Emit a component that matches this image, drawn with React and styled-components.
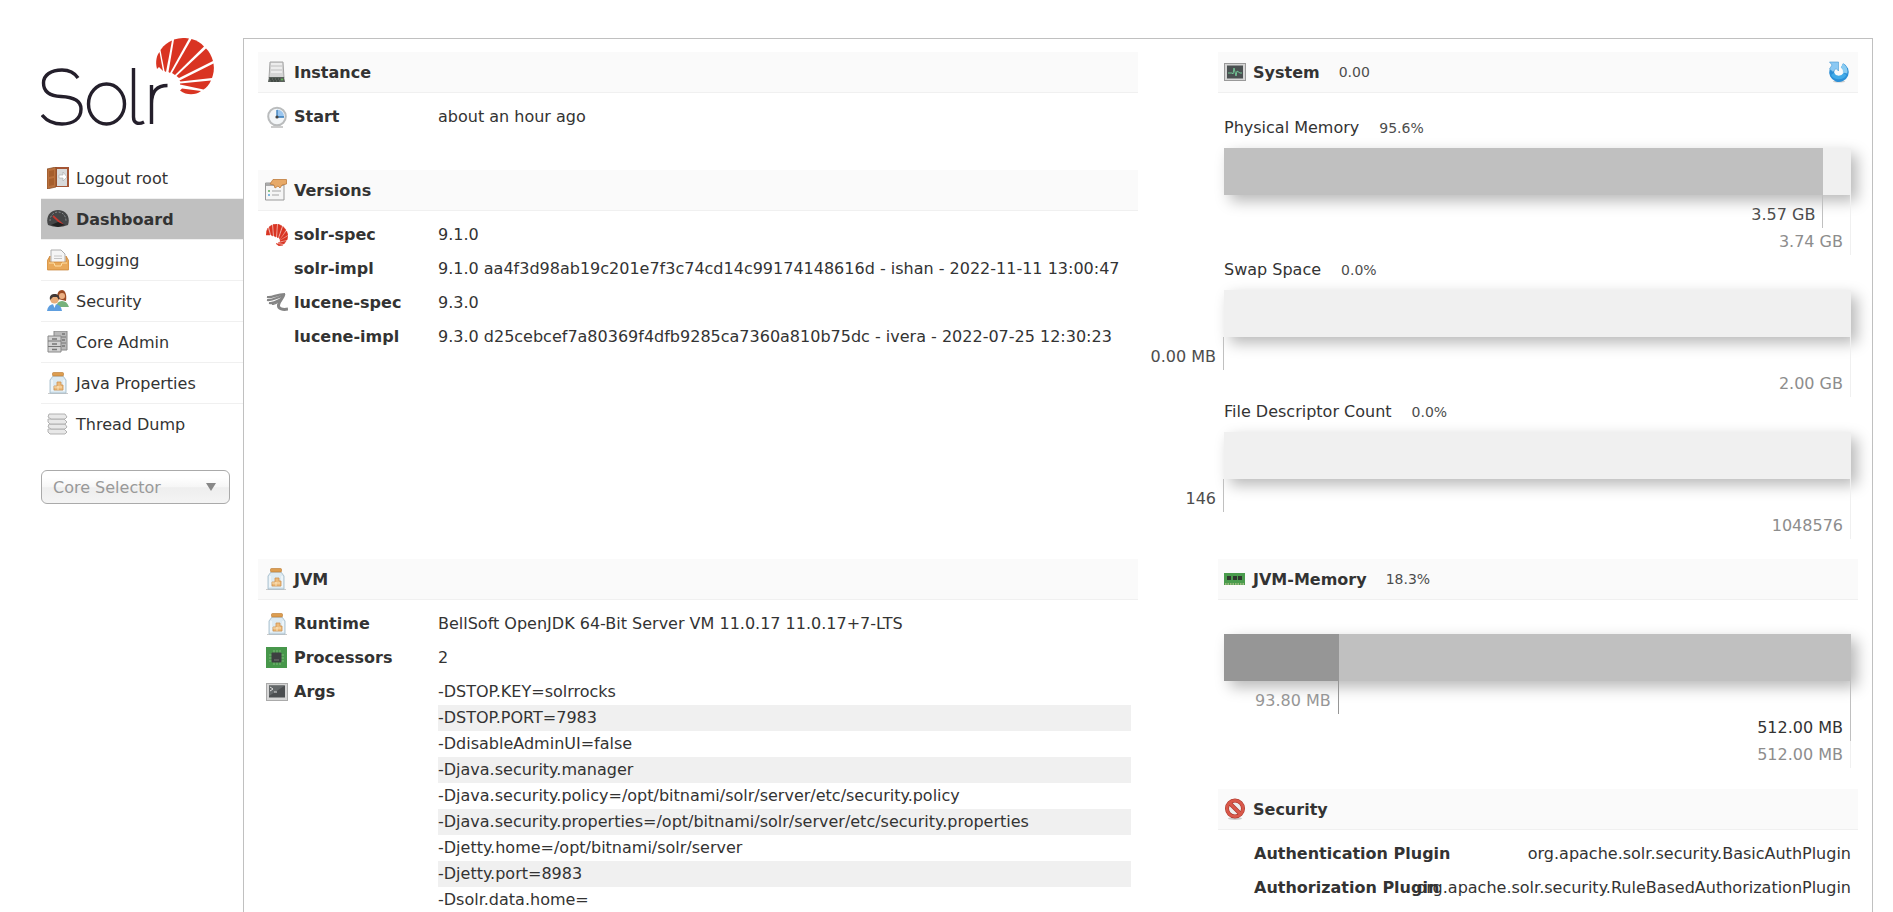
import React from "react";
import styled, { createGlobalStyle } from "styled-components";

const GlobalStyle = createGlobalStyle`
* { box-sizing: border-box; }
body {
  margin: 0;
  background: #fff;
  color: #333;
  font-family: Verdana, "DejaVu Sans", sans-serif;
  font-size: 16px;
}
h2, ul, dl, dd, p { margin: 0; padding: 0; }
ul { list-style: none; }
`;

const Page = styled.div`
display: flex;
min-height: 100vh;
padding: 38px 20px 0 41px;
`;

const Sidebar = styled.aside`
flex: 0 0 202px;
`;

const LogoLink = styled.a`
display: block;
height: 120px;
svg { display: block; }
`;

const MenuItem = styled.li`
border-bottom: 1px solid ${props => (props.$last ? "transparent" : "#f0f0f0")};
`;

const MenuLink = styled.a`
display: flex;
align-items: center;
gap: 7px;
height: 40px;
padding-left: 6px;
color: #333;
text-decoration: none;
font-weight: ${props => (props.$active ? "bold" : "normal")};
background: ${props => (props.$active ? "#c0c0c0" : "transparent")};
`;

const SelectorBox = styled.div`
position: relative;
width: 189px;
margin-top: 25px;
svg {
  position: absolute;
  right: 14px;
  top: 13px;
  pointer-events: none;
}
`;

const CoreSelect = styled.select`
appearance: none;
width: 100%;
height: 34px;
padding: 0 11px;
border: 1px solid #aaa;
border-radius: 6px;
background: linear-gradient(to bottom, #fff 20%, #f6f6f6 50%, #eee 52%, #f4f4f4 100%);
color: #999;
font: inherit;
`;

const Main = styled.main`
flex: 1;
min-width: 0;
display: grid;
grid-template-columns: 55% 40%;
grid-template-rows: auto 1fr;
justify-content: space-between;
row-gap: 20px;
padding: 13px 14px 0;
border: 1px solid #c0c0c0;
border-bottom: 0;
`;

const Column = styled.div`
min-width: 0;
`;

const Block = styled.section`
margin-bottom: ${props => props.$gap || 0}px;
`;

const Heading = styled.h2`
display: flex;
align-items: center;
gap: 7px;
height: 41px;
padding: 0 8px 0 ${props => (props.$narrow ? 6 : 7)}px;
border-bottom: 1px solid #f0f0f0;
background: #fafafa;
font-size: 16px;
`;

const Stat = styled.span`
margin-left: ${props => (props.$inHeading ? 12 : 20)}px;
color: #4d4d4d;
font-size: 14px;
font-weight: normal;
`;

const RefreshButton = styled.button`
display: flex;
margin-left: auto;
padding: 0;
border: 0;
background: none;
cursor: pointer;
`;

const Rows = styled.dl`
padding: 7px 7px 0 8px;
`;

const Row = styled.div`
display: flex;
line-height: 34px;
`;

const Label = styled.dt`
display: flex;
align-items: center;
gap: 6px;
flex: 0 0 172px;
height: 34px;
font-weight: bold;
`;

const IconSlot = styled.span`
display: flex;
flex: 0 0 22px;
`;

const Value = styled.dd`
flex: 1;
min-width: 0;
overflow: hidden;
white-space: nowrap;
`;

const ArgList = styled.ul`
padding-top: 4px;
`;

const Arg = styled.li`
line-height: 26px;
background: ${props => (props.$odd ? "#f0f0f0" : "transparent")};
`;

const PluginRow = styled.div`
display: flex;
justify-content: space-between;
line-height: 34px;
padding-left: 28px;
white-space: nowrap;
`;

const PluginLabel = styled.dt`
flex: 0 1 auto;
font-weight: bold;
`;

//긴 값은 왼쪽으로 넘친다
const PluginValue = styled.dd`
display: flex;
flex: 1 1 0;
min-width: 0;
justify-content: flex-end;
`;

const Meter = styled.div`
padding: 0 7px 0 6px;
`;

const MeterTitle = styled.p`
height: 35px;
line-height: 30px;
`;

const Track = styled.div`
height: 47px;
background: #f0f0f0;
box-shadow: 6px 6px 14px #b8b8b8;
`;

const Fill = styled.div`
height: 100%;
background: ${props => props.$color};
`;

const Scale = styled.div`
position: relative;
height: ${props => props.$height}px;
`;

//눈금은 막대 아래에 겹쳐서 그린다
const Mark = styled.span`
position: absolute;
top: 0;
right: ${props => 100 - props.$at}%;
display: flex;
align-items: flex-end;
height: ${props => props.$depth}px;
padding-right: 7px;
border-right: 1px solid ${props => props.$line};
color: ${props => props.$color};
line-height: 26px;
white-space: nowrap;
`;

const Logo = () => (
  <svg width="175" height="90" viewBox="0 0 175 90" aria-label="Solr" role="img">
    <g fill="none" stroke="#241f2b" strokeWidth="3.4">
      <path d="M37 40C33 34 28 32 21 32C10 32 2.500 37 2.500 45C2.500 54 9 58 20 58.500C32 59 40 62 40 71C40 81 32 86 21 86C13 86 6 83 1 77" />
      <ellipse cx="65.500" cy="66" rx="18" ry="20" />
      <path d="M92.500 30V79C92.500 85 97 87 103 84" />
      <path d="M110.500 86V47M110.500 66C110.500 53 116 47.500 126.500 47.500" />
    </g>
    <g fill="#d93422">
      <path d="M116 31C114 23 116 17 118.500 14L122 33L118 29Z" />
      <path d="M119.500 12C123 7 127 4 131 2.500L125 34L123.500 33Z" />
      <path d="M133 1.500C138 0 144 -0.500 148 0.500L129 35L127.500 34Z" />
      <path d="M150.500 1C156 2.500 160 5 163 8.500L134 37L131 35Z" />
      <path d="M165 10.500C168 13 170.500 18 172 23L138 40L135.500 38Z" />
      <path d="M172.500 25.500C173.500 31 172.500 36 171 40L139.500 43.500L138.500 42.500Z" />
      <path d="M170 42.500C168 47 165.500 49.500 162.500 51.500L139 46.500V45.500Z" />
      <path d="M160 53C155 57 146 58 139 52.500L141 50.500Z" />
    </g>
  </svg>
);

const icons = {
  door: (
    <>
      <path d="M8 0H22V20H8Z" fill="#a45534" />
      <path d="M10 2H20V19H10Z" fill="#d8dadb" />
      <path d="M12 8H16V5L20 10L16 14V11H12Z" fill="#fff" stroke="#aaa" strokeWidth=".6" />
      <path d="M0 2L9 0V20L0 22Z" fill="#b9703c" stroke="#80461f" strokeWidth=".7" />
      <path d="M2 4L7 3V9L2 10ZM2 12L7 11V18L2 19Z" fill="#a55e2c" />
    </>
  ),
  gauge: (
    <>
      <path d="M1 17C-2 8 4 2 11 2S24 8 21 17Q11 21 1 17Z" fill="#454647" />
      <path d="M3 13C3 7 7 4 11 4S19 7 19 13" fill="none" stroke="#85898b" strokeDasharray="2 1.500" />
      <path d="M6 8L16 17" stroke="#c43931" strokeWidth="1.800" />
      <path d="M4 17L11 14L18 17L11 19Z" fill="#222" />
    </>
  ),
  inbox: (
    <>
      <path d="M4 1H14L18 5V15H4Z" fill="#f5f5f5" stroke="#adadad" />
      <path d="M7 7H15M7 9.500H15" stroke="#c4c4c4" />
      <path d="M0 12L3 7V13H19V7L22 12V20Q22 21 21 21H1Q0 21 0 20Z" fill="#e9a95a" stroke="#c57e30" strokeWidth=".7" />
      <path d="M2 14H7L8 17H14L15 14H20" fill="none" stroke="#ffe0a6" />
    </>
  ),
  users: (
    <>
      <path d="M11 9C9 3 12 0 15 0S20 4 19 11Z" fill="#9c4b24" />
      <circle cx="15" cy="6" r="3" fill="#ecb083" />
      <path d="M9 17Q10 11 15 11T22 17Z" fill="#77b27c" />
      <circle cx="7.500" cy="9" r="4.500" fill="#e9ad7b" />
      <path d="M3 10C2 5 5 4 8 4S13 6 12 10L10 7H6Z" fill="#413937" />
      <path d="M0 21Q1 14 7.500 14T15 21Z" fill="#5e9edf" />
      <path d="M6 14L7.500 18L9 14Z" fill="#fff" />
    </>
  ),
  cabinets: (
    <>
      <path d="M7 0H20V19H7Z" fill="#b9b9b9" stroke="#888" />
      <path d="M8 6H19M8 12H19" stroke="#777" />
      <path d="M1 5H14V21H1Z" fill="#d2d2d2" stroke="#888" />
      <path d="M1 10H14M1 15.500H14" stroke="#777" />
      <path d="M5 8H10M5 13H10M5 18.500H10M15 3H18M15 9H18M15 15H18" stroke="#777" strokeWidth="1.500" />
    </>
  ),
  jar: (
    <>
      <path d="M1 21.500H21" stroke="#c9c9c9" />
      <path d="M6 4H16L19 8V21H3V8Z" fill="#dceaf2" stroke="#9fb8c6" strokeWidth=".8" />
      <path d="M5 8V19M17 8V19" stroke="#fff" />
      <rect x="5.500" y="0.500" width="11" height="3.500" rx="1" fill="#dc9d50" stroke="#ba792f" strokeWidth=".6" />
      <path d="M7 18V14H10V10H14V13H16V18Z" fill="#edbb7b" stroke="#cf924e" strokeWidth=".8" />
      <path d="M11 14V18M7 15H15" stroke="#fff0ce" strokeWidth=".7" />
    </>
  ),
  stack: (
    <g fill="#e8e8e8" stroke="#aaa" strokeWidth=".9">
      <path d="M1 16H17L20 19L18 21H3L1 19Z" />
      <path d="M2 11H18L20 14L18 16H4L1 14Z" />
      <path d="M1 6H17L20 9L18 11H3L1 9Z" />
      <path d="M2 1H18L20 4L18 6H4L1 4Z" />
    </g>
  ),
  server: (
    <>
      <path d="M5 1H18L19 17H4Z" fill="#d5d5d5" stroke="#a6a6a6" />
      <path d="M6 3H17M6 7H17M6 11H17" stroke="#f3f3f3" strokeWidth="1.500" />
      <path d="M4 16H19L20 21H3Z" fill="#59605b" />
      <path d="M5 18H15M6 20H14" stroke="#313633" strokeDasharray="2 1" />
      <circle cx="17" cy="18.500" r="1" fill="#61bf52" />
    </>
  ),
  clock: (
    <>
      <path d="M5 21H17" stroke="#ccc" strokeWidth="2" />
      <circle cx="11" cy="10.500" r="8.800" fill="#f3f6f8" stroke="#babcbd" strokeWidth="2" />
      <path d="M11 3.500V11H18Q18 4 11 3.500Z" fill="#9bc6ef" />
      <path d="M11 4V11H18" fill="none" stroke="#357bb9" strokeWidth="1.300" />
      <circle cx="11" cy="11" r="1.600" fill="#444" />
    </>
  ),
  versions: (
    <>
      <path d="M.5 4H19V21H.5Z" fill="#f5f5f5" stroke="#999" />
      <path d="M1 4H19V7H1Z" fill="#aaa" />
      <path d="M3 12H5" stroke="#62ae62" strokeWidth="1.500" />
      <path d="M3 16H5" stroke="#55a6d8" strokeWidth="1.500" />
      <path d="M7 12H16M7 16H14" stroke="#c0c0c0" strokeWidth="1.300" />
      <path d="M5 5L8 .5H21.500V5L17 6L15 9L13 7L10 9L9 6Z" fill="#e7a967" stroke="#bf7c3c" strokeWidth=".8" />
    </>
  ),
  fan: (
    <g fill="#d93422" stroke="#d93422" strokeWidth=".5">
      <path d="M0 11Q0 7 2 4L4 11ZM3 3L6 1L7 12L5 11ZM7 0.500L11 0L10 13L8 12ZM12 0L16 2L12 14L11 13ZM17 2.500L20 6L14 15L13 14Z" />
      <path d="M20.500 7L22 11L14 16V15.500ZM22 12L21 16L14 17.500V16.500ZM20 17L18 20L12 19L14 18.500ZM17 21L13 22L10 19.500Z" />
    </g>
  ),
  lucene: (
    <g fill="none" stroke="#858585">
      <path d="M1 5C7 6 10 2 19 2M1 8C7 9 11 5 17 4M3 11C8 12 11 9 15 7" strokeWidth="2.200" />
      <path d="M18 2C17 7 13 9 12.500 13C12 17 17 18 22 17" strokeWidth="3" />
      <path d="M6 12C9 13 11 11 13 9" strokeWidth="1.500" />
    </g>
  ),
  chip: (
    <>
      <rect width="21" height="21" fill="#47974b" />
      <path d="M8 3V18M11 3V18M14 3V18M3 8H18M3 11H18M3 14H18" stroke="#8ac184" strokeWidth=".8" />
      <rect x="5.500" y="5.500" width="10" height="10" rx="1" fill="#3d4141" />
      <path d="M8 13H13" stroke="#777" />
    </>
  ),
  terminal: (
    <>
      <rect x=".5" y="2.500" width="21" height="17" fill="#d6d6d6" stroke="#aaa" />
      <rect x="3" y="4.500" width="16" height="12" fill="#4b4e50" />
      <path d="M3 4.500H19L3 15Z" fill="#64686a" />
      <path d="M4 6L7 8L4 10M8 11H11" fill="none" stroke="#ddd" />
    </>
  ),
  monitor: (
    <>
      <rect x=".5" y="2.500" width="21" height="17" fill="#d6d6d6" stroke="#999" />
      <rect x="3" y="4.500" width="16" height="13" fill="#4a5051" />
      <path d="M4 12H8L9 13L10 7L12 15L13 10L16 12H18" fill="none" stroke="#72c495" />
    </>
  ),
  ram: (
    <>
      <rect y="5" width="21" height="12" fill="#4a9c4d" />
      <path d="M1 16H20" stroke="#b5c58c" strokeWidth="1.500" strokeDasharray="1.500 1" />
      <path d="M3 8H7V12H3ZM9 8H13V12H9ZM14 8H18V12H14Z" fill="#30372f" />
    </>
  ),
  prohibit: (
    <>
      <ellipse cx="11" cy="20.500" rx="7" ry="1.500" fill="#ccc" />
      <circle cx="11" cy="10.500" r="8" fill="#eee" stroke="#a8372b" strokeWidth="4" />
      <path d="M5.500 5L16.500 16" stroke="#a8372b" strokeWidth="4" />
      <circle cx="11" cy="10.500" r="8" fill="none" stroke="#d9584a" strokeWidth="2.800" />
      <path d="M5.500 5L16.500 16" stroke="#d9584a" strokeWidth="2.800" />
    </>
  ),
  refresh: (
    <>
      <ellipse cx="11" cy="20.500" rx="6" ry="1" fill="#ccc" />
      <path d="M14 4.500A7.300 7.300 0 1 1 4 9" fill="none" stroke="#2c8fd6" strokeWidth="5" />
      <path d="M14 4.500A7.300 7.300 0 0 1 17 12" fill="none" stroke="#8accf2" strokeWidth="4.500" />
      <path d="M17 13A7.300 7.300 0 0 1 4.500 13" fill="none" stroke="#41aae8" strokeWidth="3.500" />
      <path d="M1.500 1H10.500V10L8 7.500L5 11L1.500 8L4 4Z" fill="#8ac8f3" stroke="#4799d0" strokeWidth=".6" />
    </>
  )
};

const Icon = ({ name }) => (
  <svg width="22" height="22" viewBox="0 0 22 22" aria-hidden="true">
    {icons[name]}
  </svg>
);

const menu = [
  { icon: "door", text: "Logout root" },
  { icon: "gauge", text: "Dashboard", active: true },
  { icon: "inbox", text: "Logging" },
  { icon: "users", text: "Security" },
  { icon: "cabinets", text: "Core Admin" },
  { icon: "jar", text: "Java Properties" },
  { icon: "stack", text: "Thread Dump" }
];

const versions = [
  { icon: "fan", label: "solr-spec", value: "9.1.0" },
  {
    label: "solr-impl",
    value:
      "9.1.0 aa4f3d98ab19c201e7f3c74cd14c99174148616d - ishan - 2022-11-11 13:00:47"
  },
  { icon: "lucene", label: "lucene-spec", value: "9.3.0" },
  {
    label: "lucene-impl",
    value:
      "9.3.0 d25cebcef7a80369f4dfb9285ca7360a810b75dc - ivera - 2022-07-25 12:30:23"
  }
];

const args = [
  "-DSTOP.KEY=solrrocks",
  "-DSTOP.PORT=7983",
  "-DdisableAdminUI=false",
  "-Djava.security.manager",
  "-Djava.security.policy=/opt/bitnami/solr/server/etc/security.policy",
  "-Djava.security.properties=/opt/bitnami/solr/server/etc/security.properties",
  "-Djetty.home=/opt/bitnami/solr/server",
  "-Djetty.port=8983",
  "-Dsolr.data.home="
];

const meters = [
  { title: "Physical Memory", percent: 95.6, used: "3.57 GB", total: "3.74 GB" },
  { title: "Swap Space", percent: 0, used: "0.00 MB", total: "2.00 GB" },
  { title: "File Descriptor Count", percent: 0, used: "146", total: "1048576" }
];

const InfoRow = ({ icon, label, children }) => (
  <Row>
    <Label>
      <IconSlot>{icon && <Icon name={icon} />}</IconSlot>
      {label}
    </Label>
    <Value>{children}</Value>
  </Row>
);

const UsageMeter = ({ title, percent, used, total }) => (
  <Meter>
    <MeterTitle>
      {title}
      <Stat>{percent.toFixed(1)}%</Stat>
    </MeterTitle>
    <Track>
      <Fill $color="#c0c0c0" style={{ width: `${percent}%` }} />
    </Track>
    <Scale $height={60}>
      <Mark $at={100} $depth={60} $line="#f0f0f0" $color="#8d8d8d">
        {total}
      </Mark>
      <Mark $at={percent} $depth={33} $line="#c0c0c0" $color="#4d4d4d">
        {used}
      </Mark>
    </Scale>
  </Meter>
);

const App = () => (
  <>
    <GlobalStyle />
    <Page>
      <Sidebar>
        <LogoLink href="#/">
          <Logo />
        </LogoLink>
        <nav>
          <ul>
            {menu.map((item, i) => (
              <MenuItem key={item.text} $last={i === menu.length - 1}>
                <MenuLink href="#/" $active={item.active}>
                  <Icon name={item.icon} />
                  {item.text}
                </MenuLink>
              </MenuItem>
            ))}
          </ul>
        </nav>
        <SelectorBox>
          <CoreSelect aria-label="Core Selector">
            <option>Core Selector</option>
          </CoreSelect>
          <svg width="10" height="8" viewBox="0 0 10 8" aria-hidden="true">
            <path d="M0 0H10L5 8Z" fill="#888" />
          </svg>
        </SelectorBox>
      </Sidebar>

      <Main>
        <Column>
          <Block $gap={36}>
            <Heading>
              <Icon name="server" />
              Instance
            </Heading>
            <Rows>
              <InfoRow icon="clock" label="Start">
                about an hour ago
              </InfoRow>
            </Rows>
          </Block>
          <Block>
            <Heading>
              <Icon name="versions" />
              Versions
            </Heading>
            <Rows>
              {versions.map(row => (
                <InfoRow key={row.label} icon={row.icon} label={row.label}>
                  {row.value}
                </InfoRow>
              ))}
            </Rows>
          </Block>
        </Column>

        <Column>
          <Block $gap={20}>
            <Heading $narrow>
              <Icon name="monitor" />
              System
              <Stat $inHeading>0.00</Stat>
              <RefreshButton type="button" aria-label="Refresh">
                <Icon name="refresh" />
              </RefreshButton>
            </Heading>
          </Block>
          {meters.map(meter => (
            <UsageMeter key={meter.title} {...meter} />
          ))}
        </Column>

        <Column>
          <Block>
            <Heading>
              <Icon name="jar" />
              JVM
            </Heading>
            <Rows>
              <InfoRow icon="jar" label="Runtime">
                BellSoft OpenJDK 64-Bit Server VM 11.0.17 11.0.17+7-LTS
              </InfoRow>
              <InfoRow icon="chip" label="Processors">
                2
              </InfoRow>
              <InfoRow icon="terminal" label="Args">
                <ArgList>
                  {args.map((arg, i) => (
                    <Arg key={arg} $odd={i % 2 === 1}>
                      {arg}
                    </Arg>
                  ))}
                </ArgList>
              </InfoRow>
            </Rows>
          </Block>
        </Column>

        <Column>
          <Block $gap={34}>
            <Heading $narrow>
              <Icon name="ram" />
              JVM-Memory
              <Stat $inHeading>18.3%</Stat>
            </Heading>
          </Block>
          <Block $gap={21}>
            <Meter>
              <Track>
                <Fill $color="#c0c0c0">
                  <Fill $color="#969696" style={{ width: "18.3%" }} />
                </Fill>
              </Track>
              <Scale $height={87}>
                <Mark $at={100} $depth={87} $line="#f0f0f0" $color="#8d8d8d">
                  512.00 MB
                </Mark>
                <Mark $at={100} $depth={60} $line="#c0c0c0" $color="#333">
                  512.00 MB
                </Mark>
                <Mark $at={18.3} $depth={33} $line="#969696" $color="#969696">
                  93.80 MB
                </Mark>
              </Scale>
            </Meter>
          </Block>
          <Block>
            <Heading $narrow>
              <Icon name="prohibit" />
              Security
            </Heading>
            <Rows>
              <PluginRow>
                <PluginLabel>Authentication Plugin</PluginLabel>
                <PluginValue>org.apache.solr.security.BasicAuthPlugin</PluginValue>
              </PluginRow>
              <PluginRow>
                <PluginLabel>Authorization Plugin</PluginLabel>
                <PluginValue>
                  org.apache.solr.security.RuleBasedAuthorizationPlugin
                </PluginValue>
              </PluginRow>
            </Rows>
          </Block>
        </Column>
      </Main>
    </Page>
  </>
);

export default App;
